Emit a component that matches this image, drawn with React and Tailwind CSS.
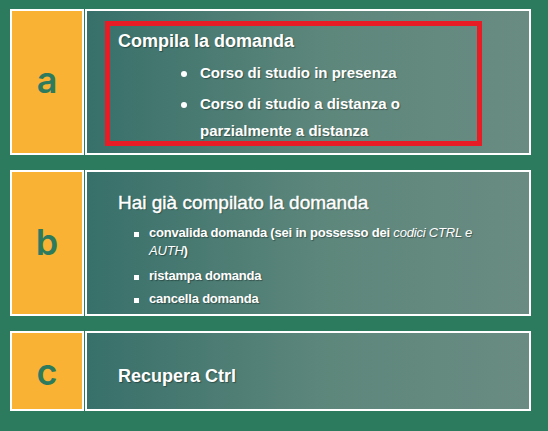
import React from 'react';

const Letter = ({ children, className = '' }) => (
  <div className="w-[74px] shrink-0 border-2 border-white bg-[#f9b233] flex items-center justify-center">
    <span
      className={`text-[36px] leading-none font-semibold text-[#2d7b5f] ${className}`}
      style={{ fontFamily: 'Inter, "Open Sans", sans-serif' }}
    >
      {children}
    </span>
  </div>
);

const Panel = ({ children, className = '' }) => (
  <div
    className={`flex-1 border-2 border-white bg-linear-to-r from-[#37706a] via-[#5e877c] via-55% to-[#698b82] text-white [text-shadow:1px_1px_1px_rgba(0,0,0,0.35)] ${className}`}
  >
    {children}
  </div>
);

const Square = () => (
  <span className="w-[16px] shrink-0 pl-[1px] pt-[8px]">
    <span className="block w-[5px] h-[5px] bg-white" />
  </span>
);

const Dot = () => (
  <span className="w-[21px] shrink-0 pl-[2px] pt-[12px]">
    <span className="block w-[6px] h-[6px] rounded-full bg-white" />
  </span>
);

export default function App() {
  return (
    <div
      className="w-[548px] h-[431px] bg-[#2d7b5f] pl-[10px] pt-[9px] flex flex-col gap-[15px]"
      style={{ fontFamily: '"Liberation Sans", Arial, sans-serif' }}
    >
      {/* Row a */}
      <div className="flex gap-px h-[146px] w-[521px]">
        <Letter className="-mt-[4px]">a</Letter>
        <Panel className="pt-[10px] pl-[18px]">
          <div className="w-[377px] h-[125px] border-[5px] border-[#e81c24] pl-[8px] pt-[3px]">
            <div className="text-[18px] font-bold leading-[24px]">Compila la domanda</div>
            <div className="pl-[61px] mt-[6px] text-[15px] font-bold">
              <div className="flex leading-[27px]">
                <Dot />
                <span>Corso di studio in presenza</span>
              </div>
              <div className="flex leading-[27px] mt-[4px]">
                <Dot />
                <span>Corso di studio a distanza o<br />parzialmente a distanza</span>
              </div>
            </div>
          </div>
        </Panel>
      </div>

      {/* Row b */}
      <div className="flex gap-px h-[146px] w-[521px]">
        <Letter className="-mt-[2px]">b</Letter>
        <Panel className="pl-[31px] pt-[19px]">
          <div className="text-[19px] leading-[24px] [-webkit-text-stroke:0.4px_white]">Hai già compilato la domanda</div>
          <ul className="mt-[9px] ml-[15px] w-[370px] text-[13px] font-bold tracking-[-0.2px] leading-[18px]">
            <li className="flex">
              <Square />
              <span>
                convalida domanda (sei in possesso dei <i className="font-normal">codici CTRL e</i>
                <br />
                <i className="font-normal">AUTH</i>)
              </span>
            </li>
            <li className="flex mt-[7px]">
              <Square />
              <span>ristampa domanda</span>
            </li>
            <li className="flex mt-[5px]">
              <Square />
              <span>cancella domanda</span>
            </li>
          </ul>
        </Panel>
      </div>

      {/* Row c */}
      <div className="flex gap-px h-[80px] w-[521px]">
        <Letter className="mt-[2px]">c</Letter>
        <Panel className="pl-[31px] flex items-center">
          <div className="text-[18px] font-bold leading-[24px] mt-[9px]">Recupera Ctrl</div>
        </Panel>
      </div>
    </div>
  );
}
